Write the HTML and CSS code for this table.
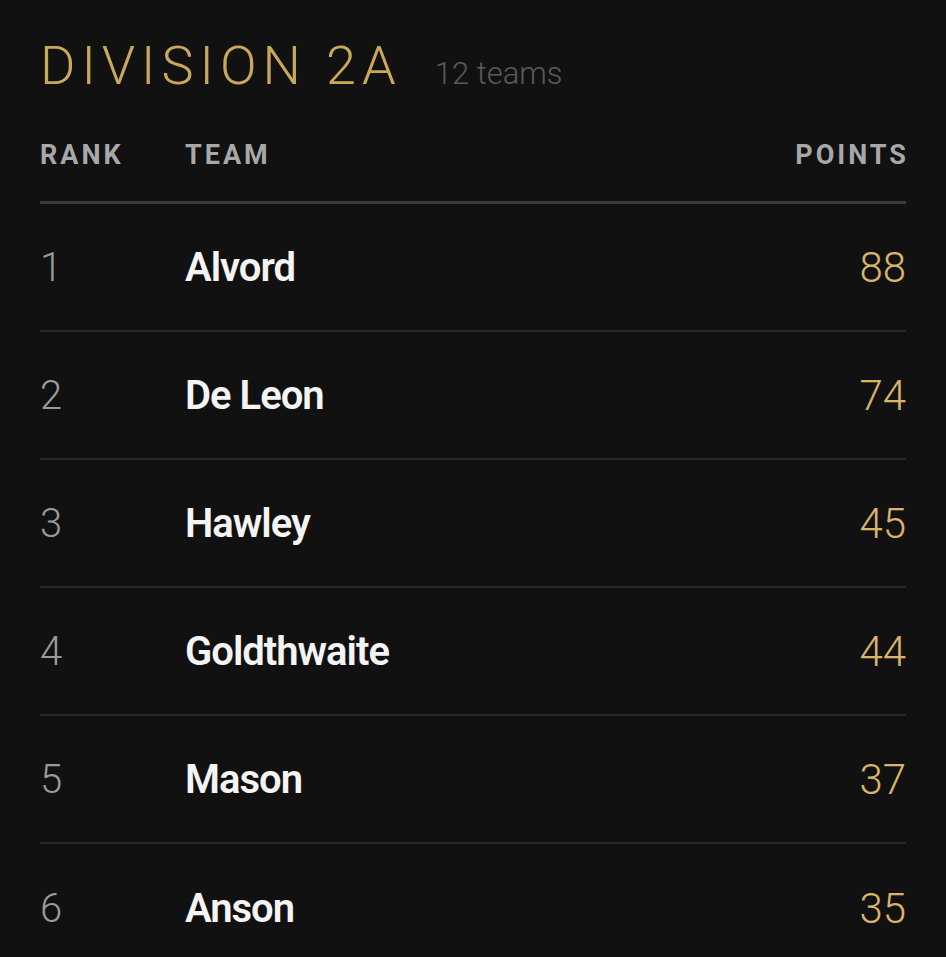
FILE: index.html
```html
<!DOCTYPE html>
<html lang="en">
<head>
<meta charset="utf-8">
<title>Division 2A</title>
<link rel="stylesheet" href="styles.css">
</head>
<body>
<main class="standings">
  <header class="title-row">
    <h1 class="division">DIVISION 2A</h1>
    <span class="count">12 teams</span>
  </header>
  <div class="table">
    <div class="head">
      <span class="col-rank">RANK</span>
      <span class="col-team">TEAM</span>
      <span class="col-points">POINTS</span>
    </div>
    <div class="row"><span class="col-rank">1</span><span class="col-team">Alvord</span><span class="col-points">88</span></div>
    <div class="row"><span class="col-rank">2</span><span class="col-team">De Leon</span><span class="col-points">74</span></div>
    <div class="row"><span class="col-rank">3</span><span class="col-team">Hawley</span><span class="col-points">45</span></div>
    <div class="row"><span class="col-rank">4</span><span class="col-team">Goldthwaite</span><span class="col-points">44</span></div>
    <div class="row"><span class="col-rank">5</span><span class="col-team">Mason</span><span class="col-points">37</span></div>
    <div class="row"><span class="col-rank">6</span><span class="col-team">Anson</span><span class="col-points">35</span></div>
  </div>
</main>
</body>
</html>
```

FILE: styles.css
```css
html, body {
  margin: 0;
  padding: 0;
  background: #111111;
}
body {
  font-family: Roboto, "Noto Sans", sans-serif;
  color: #ffffff;
}
.standings {
  padding: 28px 40px 0 40px;
}
.title-row {
  display: flex;
  align-items: baseline;
  gap: 33px;
  height: 81px;
}
.division {
  margin: 0;
  font-weight: 300;
  font-size: 54px;
  letter-spacing: 6px;
  color: #c9a85c;
  line-height: 76px;
}
.count {
  font-weight: 300;
  font-size: 31px;
  color: #5a5a5a;
}
.table {
  display: flex;
  flex-direction: column;
}
.head {
  display: grid;
  grid-template-columns: 145px 1fr auto;
  align-items: center;
  height: 95px;
  border-bottom: 3px solid #3a3a3a;
  font-weight: 700;
  font-size: 27px;
  letter-spacing: 3px;
  color: #a8a8a8;
  box-sizing: border-box;
}
.head .col-points {
  margin-right: -3px;
}
.row {
  display: grid;
  grid-template-columns: 145px 1fr auto;
  align-items: center;
  height: 128px;
  border-bottom: 2px solid #2a2a2a;
  box-sizing: border-box;
}
.row:last-child {
  border-bottom: none;
}
.row .col-rank {
  font-weight: 300;
  font-size: 40px;
  color: #9a9a9a;
}
.row .col-team {
  font-weight: 600;
  font-size: 40px;
  letter-spacing: -1px;
  color: #f4f4f4;
}
.row .col-points {
  font-weight: 300;
  font-size: 42px;
  color: #d9b56a;
  text-align: right;
}
```
